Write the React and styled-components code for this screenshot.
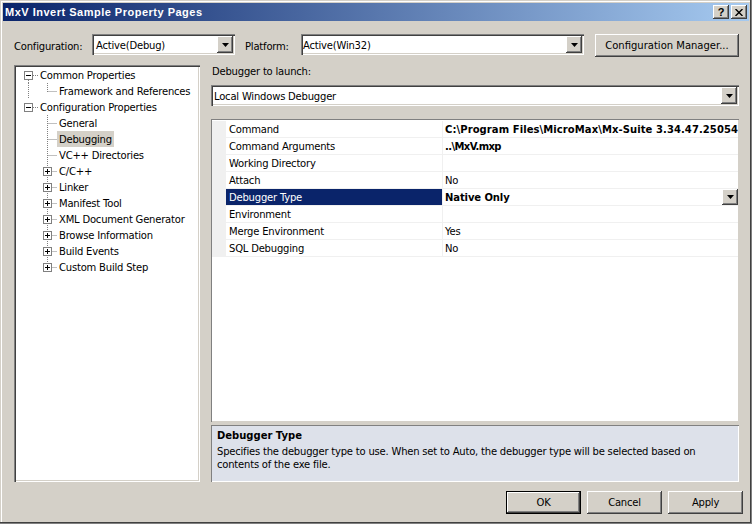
import React from "react";
import styled, { createGlobalStyle } from "styled-components";

const Global = createGlobalStyle`
  html, body { margin: 0; padding: 0; background: #d4d0c8; }
  * { box-sizing: border-box; }
`;
const FONT = `"DejaVu Sans", Tahoma, sans-serif`;
const raised = `inset -1px -1px 0 #404040, inset 1px 1px 0 #ffffff, inset -2px -2px 0 #808080`;
const sunken = `inset 1px 1px 0 #808080, inset 2px 2px 0 #404040, inset -1px -1px 0 #ffffff, inset -2px -2px 0 #d4d0c8`;

const Window = styled.div`
  width: 752px; height: 524px; background: #d4d0c8; overflow: hidden;
  padding: 3px;
  box-shadow: inset -1px -1px 0 #808080, inset -2px -2px 0 #404040, inset 1px 1px 0 #d4d0c8, inset 2px 2px 0 #ffffff;
  font: 10px/16px ${FONT}; color: #000; letter-spacing: -0.2px;
  display: flex; flex-direction: column;
`;
const TitleBar = styled.div`
  height: 18px; flex: none; display: flex; align-items: center;
  background: linear-gradient(90deg, #0a246a, #a6caf0); padding: 0 2px;
`;
const TitleText = styled.div`
  flex: 1; color: #fff; font: bold 11px/18px "Liberation Sans", Arial, sans-serif; letter-spacing: 0.5px;
`;
const CaptionButton = styled.div`
  width: 16px; height: 14px; background: #d4d0c8; box-shadow: ${raised};
  display: flex; align-items: center; justify-content: center; margin-left: ${p => p.$gap || 0}px;
  font: bold 11px/14px "Liberation Sans", Arial, sans-serif;
  svg { display: block; }
`;
const Content = styled.div`
  flex: 1; display: flex; flex-direction: column; padding: 13px 6px 0 8px;
`;
const TopRow = styled.div`
  display: flex; align-items: flex-start; height: 31px; flex: none; padding-left: 3px;
`;
const FieldLabel = styled.label`
  line-height: 20px; width: ${p => p.$w}px; flex: none; padding-top: 3px;
`;
const Combo = styled.div`
  height: 21px; width: ${p => p.$w}px; background: #fff; box-shadow: ${sunken};
  display: flex; align-items: center; justify-content: space-between; flex: none;
  padding: 2px; margin-right: ${p => p.$mr || 0}px;
`;
const ComboValue = styled.span`
  padding: 2px 0 0 ${p => p.$pl ?? 2}px; line-height: 17px;
`;
const ArrowButton = styled.div`
  width: 16px; height: ${p => p.$h || 17}px; background: #d4d0c8; box-shadow: ${raised};
  display: flex; align-items: center; justify-content: center; flex: none;
`;
const PushButton = styled.button`
  font: inherit; letter-spacing: ${p => p.$ls ?? -0.2}px; color: #000; border: 0; background: #d4d0c8; padding: 0;
  width: ${p => p.$w}px; height: ${p => p.$h}px; flex: none;
  box-shadow: ${p => p.$default ? `inset 0 0 0 1px #000, inset -2px -2px 0 #404040, inset 2px 2px 0 #ffffff, inset -3px -3px 0 #808080` : raised};
`;
const Middle = styled.div`
  display: flex; height: 417px; flex: none;
`;
const Tree = styled.div`
  width: 186px; flex: none; box-shadow: ${sunken}; background: #fff;
  padding: 2px 2px 0; margin: 0 11px 0 3px;
`;
const TreeRow = styled.div`
  height: 16px; display: flex; align-items: center;
`;
const TreeGlyph = styled.svg`
  flex: none; display: block;
`;
const TreeLabel = styled.span`
  line-height: 18px; height: 16px; padding: 0 2px; white-space: nowrap;
  background: ${p => p.$selected ? "#d4d0c8" : "transparent"};
`;
const RightPane = styled.div`
  width: 528px; flex: none; display: flex; flex-direction: column;
`;
const SectionLabel = styled.div`
  height: 20px; line-height: 13px; padding-left: 1px;
`;
const GridFrame = styled.div`
  height: 303px; margin-top: 13px; background: #fff; flex: none;
  box-shadow: inset 1px 1px 0 #808080, inset -1px -1px 0 #d4d0c8; padding: 2px 1px 0 1px;
`;
const Row = styled.div`
  display: grid; grid-template-columns: 14px 216px 1fr; height: 17px;
`;
const Gutter = styled.div`
  background: #f0f0f0;
`;
const NameCell = styled.div`
  padding-left: 3px; line-height: 17px; height: 17px; border-bottom: 1px solid #f0f0f0;
  background: ${p => p.$selected ? "#0a246a" : "#fff"}; color: ${p => p.$selected ? "#fff" : "#000"};
  white-space: nowrap;
`;
const ValueCell = styled.div`
  border-left: 1px solid #f0f0f0; border-bottom: 1px solid #f0f0f0; height: 17px;
  padding-left: 2px; line-height: 17px;
  font-weight: ${p => p.$bold ? "bold" : "normal"};
  letter-spacing: ${p => p.$ls ?? -0.2}px;
  white-space: nowrap; overflow: hidden; position: relative;
`;
const CellDrop = styled.div`
  position: absolute; right: 0; top: 0;
`;
const Description = styled.div`
  height: 57px; margin-top: 3px; flex: none; background: #dde1ea;
  box-shadow: inset 1px 1px 0 #808080, inset -1px -1px 0 #ffffff; padding: 4px 6px 0 6px;
`;
const DescTitle = styled.div`
  font-weight: bold; line-height: 13px; margin-bottom: 3px; letter-spacing: 0;
`;
const DescBody = styled.div`
  line-height: 13px;
`;
const Footer = styled.div`
  display: flex; justify-content: flex-end; gap: 6px; margin-top: 9px;
`;

const Arrow = () => (
  <svg width="7" height="4" viewBox="0 0 7 4"><path d="M0 0h7L3.5 4z" fill="#000" /></svg>
);

const dot = { stroke: "#808080", strokeWidth: 1, strokeDasharray: "1 1", fill: "none" };
const Box = ({ x, plus }) => (
  <g>
    <rect x={x + 0.5} y="3.5" width="8" height="8" fill="#fff" stroke="#808080" />
    <path d={`M${x + 2} 7.5h5${plus ? `M${x + 4.5} 5v5` : ""}`} stroke="#000" />
  </g>
);

const TreeItem = ({ level, kind, trunk, end, selected, label }) => {
  const W = level === 0 ? 22 : 41;
  const vx = level === 0 ? 12.5 : 31.5;
  return (
    <TreeRow>
      <TreeGlyph width={W} height={16} viewBox={`0 -1 ${W} 16`}>
        {trunk && <path d="M12.5 -1V15" {...dot} />}
        {level === 0 && kind === "first" && <path d="M12.5 12V15" {...dot} />}
        {level === 1 && !end && <path d={`M${vx} -1V15`} {...dot} />}
        {level === 1 && end && <path d={`M${vx} -1V8`} {...dot} />}
        {level === 0 && <path d="M17 7.5H22" {...dot} />}
        {level === 1 && <path d={`M${vx} 7.5H41`} {...dot} />}
        {level === 0 && <Box x={8} plus={false} />}
        {level === 1 && kind === "plus" && <Box x={27} plus />}
      </TreeGlyph>
      <TreeLabel $selected={selected}>{label}</TreeLabel>
    </TreeRow>
  );
};

const treeItems = [
  { level: 0, kind: "first", label: "Common Properties" },
  { level: 1, kind: "leaf", end: true, trunk: true, label: "Framework and References" },
  { level: 0, label: "Configuration Properties" },
  { level: 1, kind: "leaf", label: "General" },
  { level: 1, kind: "leaf", label: "Debugging", selected: true },
  { level: 1, kind: "leaf", label: "VC++ Directories" },
  { level: 1, kind: "plus", label: "C/C++" },
  { level: 1, kind: "plus", label: "Linker" },
  { level: 1, kind: "plus", label: "Manifest Tool" },
  { level: 1, kind: "plus", label: "XML Document Generator" },
  { level: 1, kind: "plus", label: "Browse Information" },
  { level: 1, kind: "plus", label: "Build Events" },
  { level: 1, kind: "plus", end: true, label: "Custom Build Step" },
];

const props = [
  { name: "Command", value: "C:\\Program Files\\MicroMax\\Mx-Suite 3.34.47.25054", bold: true, ls: 0.08 },
  { name: "Command Arguments", value: "..\\MxV.mxp", bold: true, ls: -0.6 },
  { name: "Working Directory", value: "" },
  { name: "Attach", value: "No" },
  { name: "Debugger Type", value: "Native Only", bold: true, ls: -0.1, selected: true },
  { name: "Environment", value: "" },
  { name: "Merge Environment", value: "Yes" },
  { name: "SQL Debugging", value: "No" },
];

export default function App() {
  return (
    <Window>
      <Global />
      <TitleBar>
        <TitleText>MxV Invert Sample Property Pages</TitleText>
        <CaptionButton>?</CaptionButton>
        <CaptionButton $gap={2}>
          <svg width="8" height="7" viewBox="0 0 8 7"><path d="M0.5 0L7.5 7M7.5 0L0.5 7" stroke="#000" strokeWidth="1.4" /></svg>
        </CaptionButton>
      </TitleBar>
      <Content>
        <TopRow>
          <FieldLabel $w={78}>Configuration:</FieldLabel>
          <Combo $w={143} $mr={10}>
            <ComboValue>Active(Debug)</ComboValue>
            <ArrowButton><Arrow /></ArrowButton>
          </Combo>
          <FieldLabel $w={56}>Platform:</FieldLabel>
          <Combo $w={283} $mr={11}>
            <ComboValue $pl={0}>Active(Win32)</ComboValue>
            <ArrowButton><Arrow /></ArrowButton>
          </Combo>
          <PushButton $w={144} $h={23} $ls={0}>Configuration Manager...</PushButton>
        </TopRow>
        <Middle>
          <Tree>
            {treeItems.map(t => <TreeItem key={t.label} {...t} />)}
          </Tree>
          <RightPane>
            <SectionLabel>Debugger to launch:</SectionLabel>
            <Combo $w={528}>
              <ComboValue $pl={1}>Local Windows Debugger</ComboValue>
              <ArrowButton><Arrow /></ArrowButton>
            </Combo>
            <GridFrame>
              {props.map(p => (
                <Row key={p.name}>
                  <Gutter />
                  <NameCell $selected={p.selected}>{p.name}</NameCell>
                  <ValueCell $bold={p.bold} $ls={p.ls}>
                    {p.value}
                    {p.selected && <CellDrop><ArrowButton $h={16}><Arrow /></ArrowButton></CellDrop>}
                  </ValueCell>
                </Row>
              ))}
            </GridFrame>
            <Description>
              <DescTitle>Debugger Type</DescTitle>
              <DescBody>Specifies the debugger type to use. When set to Auto, the debugger type will be selected based on contents of the exe file.</DescBody>
            </Description>
          </RightPane>
        </Middle>
        <Footer>
          <PushButton $w={75} $h={23} $default>OK</PushButton>
          <PushButton $w={75} $h={23}>Cancel</PushButton>
          <PushButton $w={75} $h={23}>Apply</PushButton>
        </Footer>
      </Content>
    </Window>
  );
}
